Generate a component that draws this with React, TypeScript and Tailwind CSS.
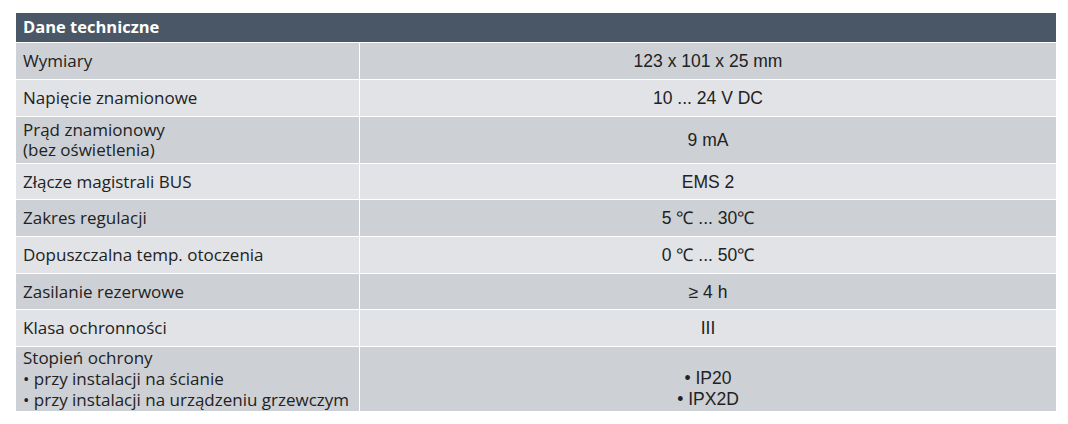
const rows: { label: string[]; value: string[]; h: string; multi?: boolean }[] = [
  { label: ['Wymiary'], value: ['123 x 101 x 25 mm'], h: 'h-[36px]' },
  { label: ['Napięcie znamionowe'], value: ['10 ... 24 V DC'], h: 'h-[36px]' },
  { label: ['Prąd znamionowy', '(bez oświetlenia)'], value: ['9 mA'], h: 'h-[46px]' },
  { label: ['Złącze magistrali BUS'], value: ['EMS 2'], h: 'h-[35px]' },
  { label: ['Zakres regulacji'], value: ['5 ℃ ... 30℃'], h: 'h-[36px]' },
  { label: ['Dopuszczalna temp. otoczenia'], value: ['0 ℃ ... 50℃'], h: 'h-[36px]' },
  { label: ['Zasilanie rezerwowe'], value: ['≥ 4 h'], h: 'h-[35px]' },
  { label: ['Klasa ochronności'], value: ['III'], h: 'h-[36px]' },
  {
    label: ['Stopień ochrony', '• przy instalacji na ścianie', '• przy instalacji na urządzeniu grzewczym'],
    value: ['\u00a0', '• IP20', '• IPX2D'],
    h: 'h-[64px]',
    multi: true,
  },
];

export default function App() {
  return (
    <div className="w-[1068px] h-[424px] bg-white pt-[13px] pl-[16px]">
      <div className="w-[1040px] grid grid-cols-[343px_1fr] gap-x-[1px] gap-y-[1px] bg-white">
        <div className="col-span-2 h-[29px] bg-[#4a5766] flex items-center px-[7px]">
          <span className="font-['Open_Sans',sans-serif] font-bold text-[16.5px] text-white">Dane techniczne</span>
        </div>
        {rows.map((r, i) => {
          const bg = i % 2 === 0 ? 'bg-[#cdd1d5]' : 'bg-[#e1e3e6]';
          return (
            <div key={i} className="contents">
              <div
                className={`${r.h} ${bg} flex flex-col ${r.multi ? 'justify-start leading-[21px]' : 'justify-center leading-[20px]'} px-[7px] font-['Open_Sans',sans-serif] text-[17px] text-[#222]`}
              >
                {r.label.map((l, j) => (
                  <span key={j} className="whitespace-nowrap">{l}</span>
                ))}
              </div>
              <div
                className={`${r.h} ${bg} flex flex-col items-center ${r.multi ? 'justify-start leading-[21px]' : 'justify-center leading-[20px]'} font-['Liberation_Sans',Arial,sans-serif] text-[17.5px] text-[#222]`}
              >
                {r.value.map((v, j) => (
                  <span key={j}>{v}</span>
                ))}
              </div>
            </div>
          );
        })}
      </div>
    </div>
  );
}
